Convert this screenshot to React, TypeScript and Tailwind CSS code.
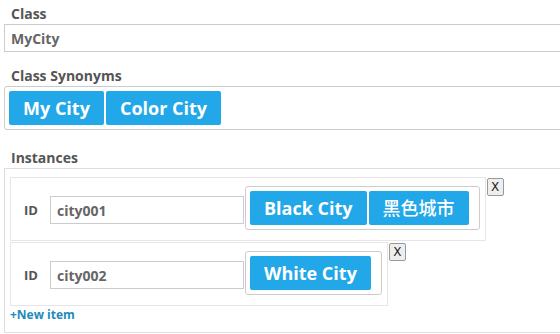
import type { ReactNode } from "react";

const sans = "font-['Open_Sans','Noto_Sans_CJK_SC',sans-serif]";

type Instance = { id: string; names: string[] };

const instances: Instance[] = [
  { id: "city001", names: ["Black City", "黑色城市"] },
  { id: "city002", names: ["White City"] },
];

function Label({ children, className = "" }: { children: ReactNode; className?: string }) {
  return (
    <div className={`pl-[11px] text-[14px] leading-[18px] font-bold text-[#555] ${className}`}>
      {children}
    </div>
  );
}

function Tag({ text }: { text: string }) {
  const cjk = /[\u4e00-\u9fff]/.test(text);
  return (
    <span
      className={`flex h-[34px] items-center rounded-[2px] bg-[#22a7e8] px-[14px] text-[18px] text-white ${
        cjk ? "font-medium" : "font-bold"
      }`}
    >
      {text}
    </span>
  );
}

function InstanceRow({ item }: { item: Instance }) {
  return (
    <div className="mb-[1px] flex items-start">
      <div className="flex items-start border border-[#e6e6e6] pt-[8px] pr-[5px] pb-[10px] pl-[13px]">
        <span className="mt-[10px] h-[28px] w-[26px] text-[13px] leading-[28px] font-bold text-[#555]">
          ID
        </span>
        <input
          readOnly
          value={item.id}
          className="mt-[10px] h-[28px] w-[194px] border border-[#ccc] px-[6px] text-[14px] font-bold text-[#666] outline-none"
        />
        <div className="ml-[1px] flex gap-[2px] rounded-[3px] border border-[#ccc] p-[4px] pr-[10px]">
          {item.names.map((n) => (
            <Tag key={n} text={n} />
          ))}
        </div>
      </div>
      <button className="mt-[1px] ml-[1px] flex h-[18px] w-[17px] items-center justify-center rounded-[2px] border border-[#999] bg-[#eee] font-['DejaVu_Sans',sans-serif] text-[12px] text-[#222]">
        X
      </button>
    </div>
  );
}

export default function App() {
  return (
    <div className={`h-[334px] w-[560px] overflow-hidden bg-white pt-[5px] ${sans}`}>
      <Label>Class</Label>
      <input
        readOnly
        value="MyCity"
        className="mt-[1px] ml-[4px] block h-[28px] w-[620px] border border-[#ccc] px-[6px] text-[14px] font-bold text-[#666] outline-none"
      />

      <Label className="mt-[15px]">Class Synonyms</Label>
      <div className="mt-[1px] ml-[4px] flex w-[620px] gap-[2px] rounded-[3px] border border-[#ccc] p-[4px]">
        <Tag text="My City" />
        <Tag text="Color City" />
      </div>

      <Label className="mt-[19px]">Instances</Label>
      <div className="mt-[1px] ml-[4px] h-[165px] w-[620px] border border-[#ddd] pt-[8px] pl-[5px]">
        {instances.map((it) => (
          <InstanceRow key={it.id} item={it} />
        ))}
        <div className="text-[12px] leading-[16px] font-bold text-[#1d8bb9]">+New item</div>
      </div>
    </div>
  );
}
